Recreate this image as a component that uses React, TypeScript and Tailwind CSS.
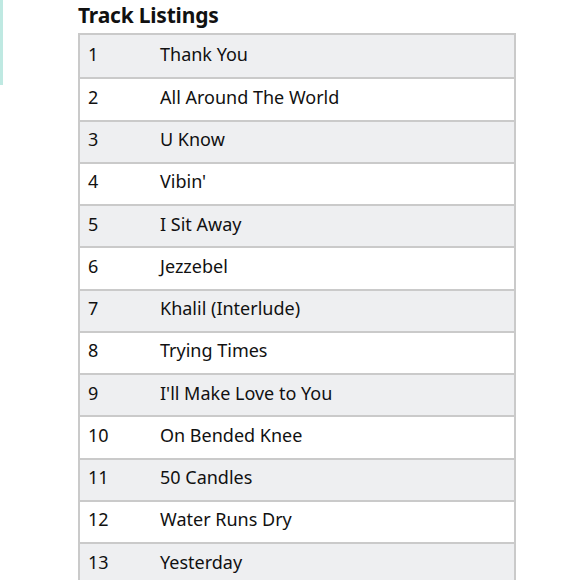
const tracks = [
  'Thank You',
  'All Around The World',
  'U Know',
  "Vibin'",
  'I Sit Away',
  'Jezzebel',
  'Khalil (Interlude)',
  'Trying Times',
  "I'll Make Love to You",
  'On Bended Knee',
  '50 Candles',
  'Water Runs Dry',
  'Yesterday',
];

export default function App() {
  return (
    <div className="w-[580px] h-[580px] overflow-hidden bg-white flex font-['Noto_Sans',sans-serif] text-[#111]">
      <div className="w-[3px] shrink-0">
        <div className="h-[85px] bg-[#bfe9e2]"></div>
      </div>
      <div className="ml-[75px] w-[438px]">
        <h2 className="h-[33px] text-[21px] font-bold leading-[31px] tracking-[-0.2px]">Track Listings</h2>
        <div className="border-x-2 border-t-2 border-[#cacaca]">
          {tracks.map((t, i) => (
            <div
              key={i}
              className={`flex items-center h-[42.25px] pb-[4px] text-[18px] ${i > 0 ? 'border-t-2 border-[#cacaca]' : ''} ${i % 2 === 0 ? 'bg-[#eeeff1]' : 'bg-white'}`}
            >
              <span className="w-[80px] pl-[8px]">{i + 1}</span>
              <span>{t}</span>
            </div>
          ))}
        </div>
      </div>
    </div>
  );
}
